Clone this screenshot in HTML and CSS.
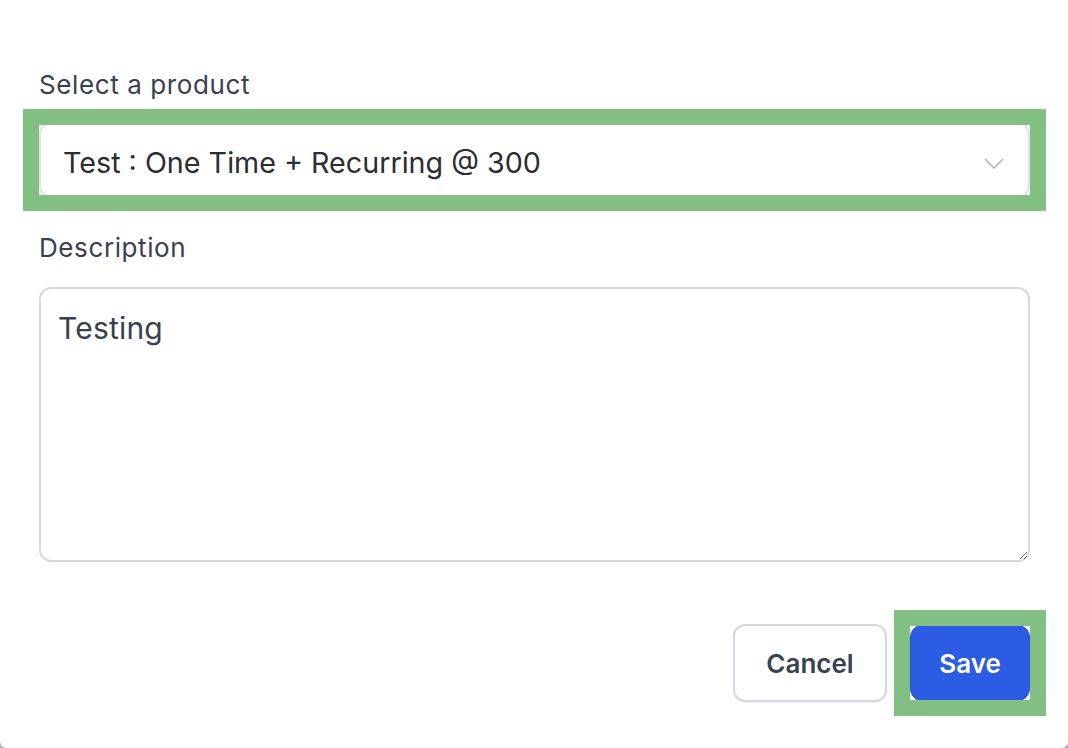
FILE: index.html
```html
<!DOCTYPE html>
<html lang="en">
<head>
    <meta charset="UTF-8">
    <meta name="viewport" content="width=device-width, initial-scale=1.0">
    <title>Add product</title>
    <link rel="stylesheet" href="styles.css">
</head>
<body>
    <div class="dialog">
        <div class="field">
            <label class="label" for="product">Select a product</label>
            <div class="highlight highlight-select">
                <div class="select" id="product">
                    <span>Test : One Time + Recurring @ 300</span>
                    <svg class="chevron" width="20" height="11" viewBox="0 0 20 11">
                        <path d="M1 1 L10 10 L19 1" fill="none" stroke="#b3b3b3" stroke-width="1.6"/>
                    </svg>
                </div>
            </div>
        </div>

        <div class="field field-desc">
            <label class="label" for="desc">Description</label>
            <textarea id="desc" class="textarea" readonly>Testing</textarea>
        </div>

        <div class="actions">
            <button type="button" class="btn btn-cancel">Cancel</button>
            <div class="highlight highlight-save">
                <button type="button" class="btn btn-save">Save</button>
            </div>
        </div>
    </div>
</body>
</html>
```

FILE: styles.css
```css
html {
    background: #b5b5b5;
}
body {
    margin: 0;
    height: 748px;
    background: #fff;
    border-radius: 0 0 7px 7px;
    font-family: Inter, "Noto Sans", sans-serif;
    color: #374151;
}
.dialog {
    padding: 69px 38px 0 39px;
}
.label {
    display: block;
    font-size: 26px;
    line-height: 32px;
    letter-spacing: 0.6px;
    color: #374151;
    margin-bottom: 21px;
}
.field-desc {
    margin-top: 34px;
}
.field-desc .label {
    margin-bottom: 23px;
}
.highlight {
    position: relative;
}
.highlight::after {
    content: "";
    position: absolute;
    border: 16px solid #82bf82;
    pointer-events: none;
}
.highlight-select::after {
    top: -13px;
    bottom: -13px;
    left: -16px;
    right: -16px;
}
.select {
    height: 76px;
    box-sizing: border-box;
    border: 2px solid #e2e2e6;
    border-radius: 12px;
    display: flex;
    align-items: center;
    justify-content: space-between;
    padding: 5px 24px 0 22px;
    font-size: 28.7px;
    color: #2b2d31;
}
.chevron {
    margin-top: 1px;
}
.textarea {
    display: block;
    width: 100%;
    height: 275px;
    box-sizing: border-box;
    border: 2px solid #d5d8de;
    border-radius: 12px;
    padding: 21px 17px;
    font-family: inherit;
    font-size: 30px;
    letter-spacing: 0.2px;
    color: #374151;
    resize: vertical;
    outline: none;
}
.actions {
    margin-top: 62px;
    display: flex;
    justify-content: flex-end;
    align-items: center;
    gap: 23px;
}
.btn {
    font-family: inherit;
    font-size: 26px;
    font-weight: 600;
    border-radius: 12px;
    cursor: pointer;
}
.btn-cancel {
    width: 154px;
    height: 78px;
    background: #fff;
    border: 2px solid #d5d8de;
    color: #374151;
    box-shadow: 0 1px 2px rgba(0,0,0,0.06);
}
.btn-save {
    display: block;
    width: 120px;
    height: 76px;
    background: #2c5be4;
    border: 1px solid #2550d6;
    color: #fff;
}
.highlight-save::after {
    top: -15px;
    bottom: -15px;
    left: -16px;
    right: -16px;
}
```
